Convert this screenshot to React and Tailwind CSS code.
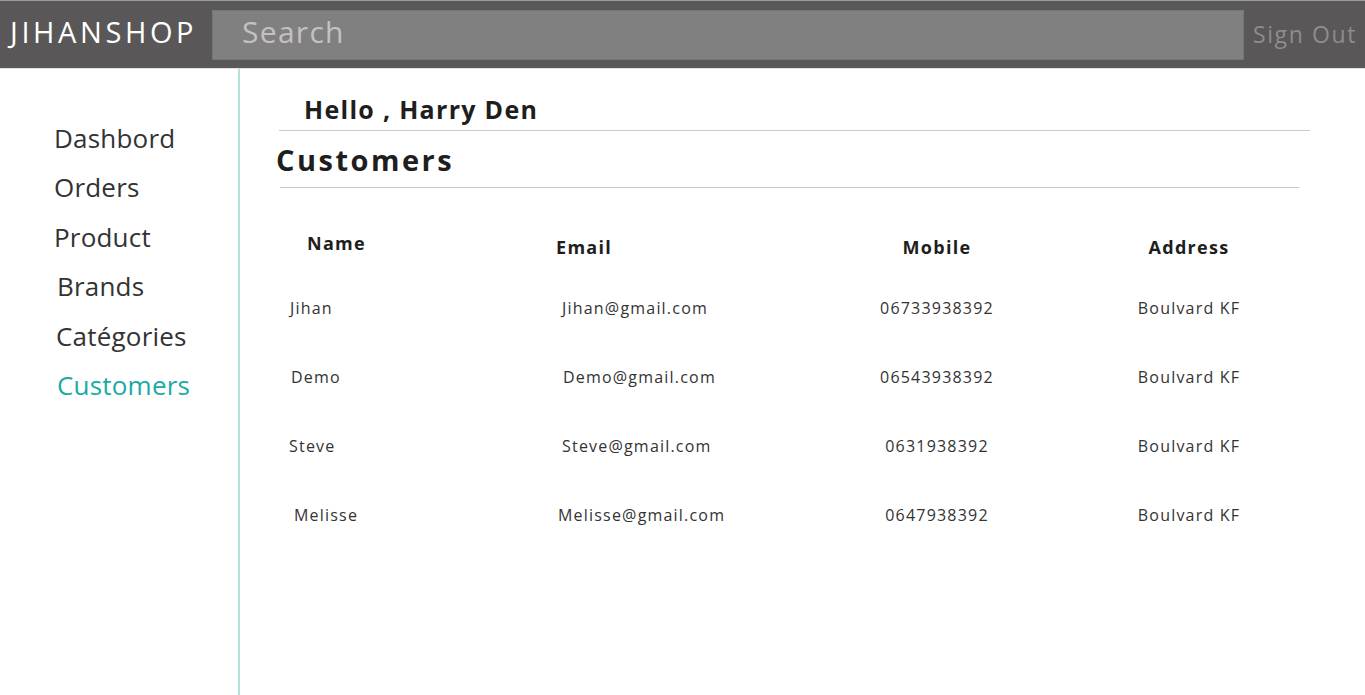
import React from 'react';

const NAV = [
  { label: 'Dashbord', cls: 'pl-[54px]' },
  { label: 'Orders', cls: 'pl-[54px]' },
  { label: 'Product', cls: 'pl-[54px]' },
  { label: 'Brands', cls: 'pl-[57px]' },
  { label: 'Catégories', cls: 'pl-[56px]' },
  { label: 'Customers', cls: 'pl-[57px]', active: true },
];

const CUSTOMERS = [
  { name: 'Jihan', nameCls: 'pl-[13px]', emailCls: 'pl-[13px]', email: 'Jihan@gmail.com', mobile: '06733938392', address: 'Boulvard KF' },
  { name: 'Demo', nameCls: 'pl-[14px]', emailCls: 'pl-[14px]', email: 'Demo@gmail.com', mobile: '06543938392', address: 'Boulvard KF' },
  { name: 'Steve', nameCls: 'pl-[12px]', emailCls: 'pl-[13px]', email: 'Steve@gmail.com', mobile: '0631938392', address: 'Boulvard KF' },
  { name: 'Melisse', nameCls: 'pl-[17px]', emailCls: 'pl-[9px]', email: 'Melisse@gmail.com', mobile: '0647938392', address: 'Boulvard KF' },
];

export default function App() {
  return (
    <div className="h-[695px] bg-white font-['Open_Sans',sans-serif] flex flex-col overflow-hidden">
      {/* Top bar */}
      <header className="h-[69px] shrink-0 bg-[#595757] border-t border-t-[#9a9a9a] border-b border-b-[#e2e2e2] flex items-center">
        <div className="pl-[10px] w-[212px] pb-[6px] text-[29px] text-white tracking-[3.6px] leading-none">JIHANSHOP</div>
        <div className="w-[1032px] h-[50px] bg-[#808080] border border-[#767676] flex items-center pl-[29px] pb-[6px]">
          <span className="text-[30px] text-[#c7c0c0] leading-none tracking-[1.3px]">Search</span>
        </div>
        <div className="pl-[9px] text-[23px] text-[#8f8c8c] leading-none tracking-[1.6px]">Sign Out</div>
      </header>

      <div className="flex flex-1 min-h-0">
        {/* Sidebar */}
        <nav className="w-[240px] shrink-0 border-r-2 border-r-[#b4e0dc] pt-[49px] flex flex-col gap-[10.6px]">
          {NAV.map((item) => (
            <div
              key={item.label}
              className={`${item.cls} h-[39px] flex items-center text-[26px] leading-none tracking-[0.2px] ${item.active ? 'text-[#1aaba5]' : 'text-[#333]'}`}
            >
              {item.label}
            </div>
          ))}
        </nav>

        {/* Main */}
        <main className="flex-1 pl-[37px] pt-[23px]">
          <div className="w-[1031px] ml-[2px] border-b border-[#c9c9c9] pb-[4px] pl-[25px]">
            <h2 className="text-[25px] font-bold text-[#1e1e1e] leading-[34px] tracking-[1.3px]">Hello , Harry Den</h2>
          </div>
          <div className="w-[1019px] ml-[3px] border-b border-[#c9c9c9] pb-[7px] pt-[9px]">
            <h1 className="text-[29px] font-bold text-[#1e1e1e] leading-[40px] -ml-[4px] tracking-[2.5px]">Customers</h1>
          </div>

          <div className="grid grid-cols-[272px_246px_284px_220px] w-[1022px] mt-[43px]">
            <div className="pl-[30px] text-[18px] font-bold text-[#1e1e1e] leading-[24px] tracking-[1.3px]">Name</div>
            <div className="pl-[7px] pt-[4px] text-[18px] font-bold text-[#1e1e1e] leading-[24px] tracking-[1.3px]">Email</div>
            <div className="text-center pt-[4px] text-[18px] font-bold text-[#1e1e1e] leading-[24px] tracking-[1.3px]">Mobile</div>
            <div className="text-center pt-[4px] text-[18px] font-bold text-[#1e1e1e] leading-[24px] tracking-[1.3px]">Address</div>

            {CUSTOMERS.map((c) => (
              <React.Fragment key={c.name}>
                <div className={`${c.nameCls} text-[16px] tracking-[1.2px] text-[#333] h-[69px] flex items-end pb-[8px]`}>{c.name}</div>
                <div className={`${c.emailCls} text-[16px] tracking-[1.2px] text-[#333] h-[69px] flex items-end pb-[8px]`}>{c.email}</div>
                <div className="text-[16px] tracking-[1.2px] text-[#333] h-[69px] flex items-end justify-center pb-[8px]">{c.mobile}</div>
                <div className="text-[16px] tracking-[1.2px] text-[#333] h-[69px] flex items-end justify-center pb-[8px]">{c.address}</div>
              </React.Fragment>
            ))}
          </div>
        </main>
      </div>
    </div>
  );
}
